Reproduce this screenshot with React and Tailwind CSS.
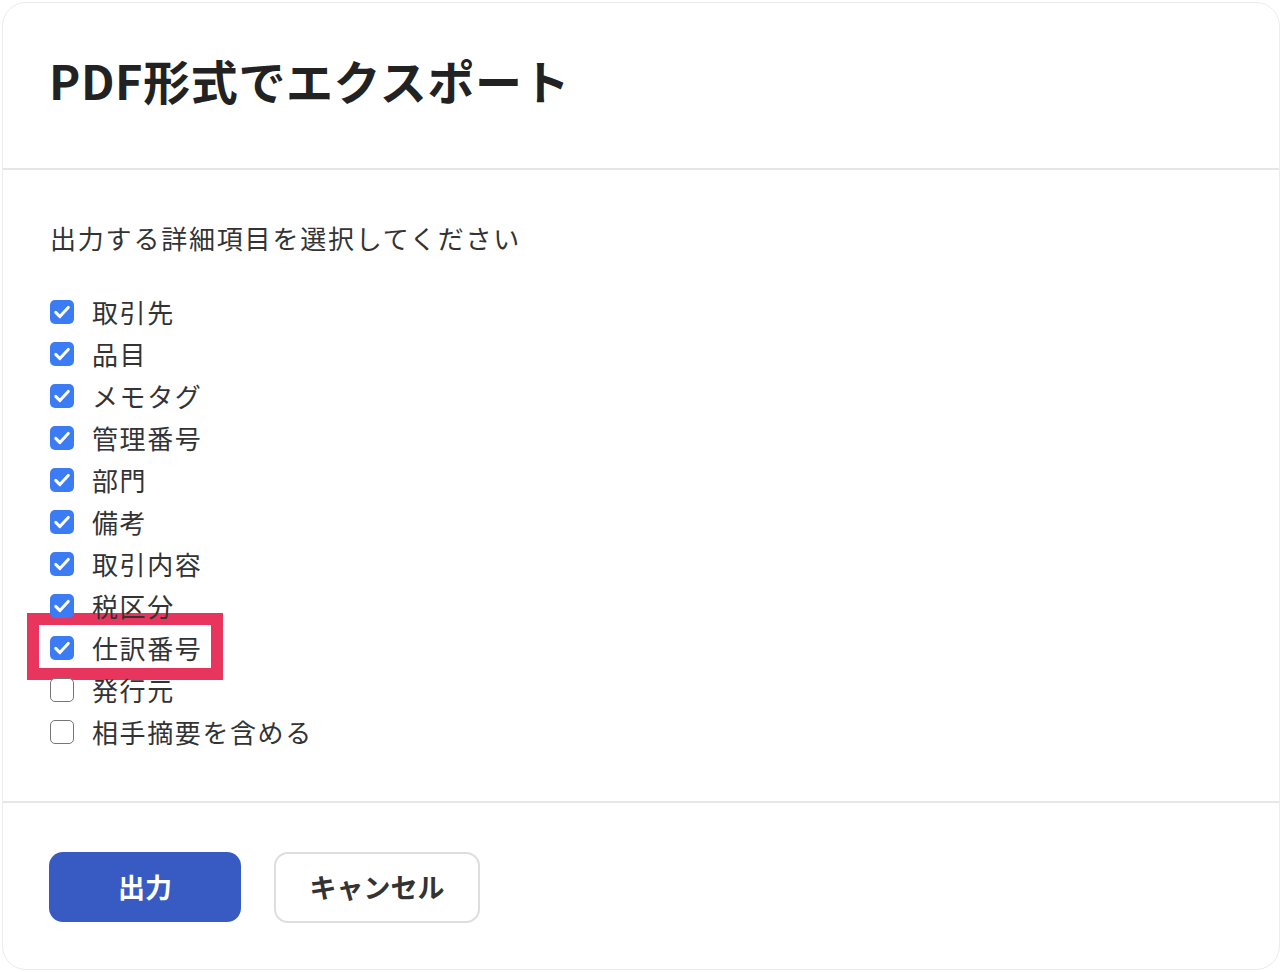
import { useState } from "react";

const ITEMS = [
  { label: "取引先", checked: true },
  { label: "品目", checked: true },
  { label: "メモタグ", checked: true },
  { label: "管理番号", checked: true },
  { label: "部門", checked: true },
  { label: "備考", checked: true },
  { label: "取引内容", checked: true },
  { label: "税区分", checked: true },
  { label: "仕訳番号", checked: true, highlight: true },
  { label: "発行元", checked: false },
  { label: "相手摘要を含める", checked: false },
];

function CheckBox({ checked, onClick }) {
  if (checked) {
    return (
      <button
        type="button"
        onClick={onClick}
        className="w-6 h-6 rounded-[5px] bg-[#3b7cf4] flex items-center justify-center shrink-0"
      >
        <svg className="w-[20px] h-[20px]" viewBox="0 0 24 24" fill="none">
          <path
            d="M4.5 12.5l5 5L19.5 6.5"
            stroke="white"
            strokeWidth={3.6}
            strokeLinecap="round"
            strokeLinejoin="round"
          />
        </svg>
      </button>
    );
  }
  return (
    <button
      type="button"
      onClick={onClick}
      className="w-6 h-6 rounded-[5px] border-[1.5px] border-[#767676] bg-white shrink-0"
    />
  );
}

export default function App() {
  const [items, setItems] = useState(ITEMS);

  function toggle(i) {
    setItems((prev) => prev.map((it, j) => (j === i ? { ...it, checked: !it.checked } : it)));
  }

  return (
    <div
      className="min-h-screen bg-white p-[2px] text-[#333]"
      style={{ fontFamily: '"Noto Sans CJK JP", "Noto Sans", sans-serif' }}
    >
      <div className="h-[968px] rounded-[24px] border border-[#ececec] bg-white flex flex-col">
        <div className="h-[167px] flex items-center px-[46px] pb-[10px] border-b-2 border-[#e6e6e6]">
          <h1 className="text-[47px] font-bold text-[#222] tracking-[0.6px]">PDF形式でエクスポート</h1>
        </div>

        <div className="px-[47px] pt-[50px] pb-[48px] border-b-2 border-[#e6e6e6]">
          <p className="text-[26px] leading-[36px] text-[#333] tracking-[1.8px]">出力する詳細項目を選択してください</p>
          <ul className="mt-[35px]">
            {items.map((it, i) => (
              <li key={it.label} className="h-[42px] flex items-center">
                <div className="relative flex items-center">
                  {it.highlight && (
                    <div className="absolute -left-[23px] -top-[17px] w-[196px] h-[67px] border-[12px] border-[#e8355e] bg-white z-10" />
                  )}
                  <div className="relative z-20 flex items-center gap-[18px]">
                    <CheckBox checked={it.checked} onClick={() => toggle(i)} />
                    <span className="text-[26px] leading-[36px] text-[#333] tracking-[1.6px]">{it.label}</span>
                  </div>
                </div>
              </li>
            ))}
          </ul>
        </div>

        <div className="flex items-start gap-[33px] px-[46px] pt-[49px]">
          <button
            type="button"
            className="w-[192px] h-[70px] rounded-[14px] bg-[#385bc3] text-white text-[27px] font-bold"
          >
            出力
          </button>
          <button
            type="button"
            className="w-[206px] h-[71px] rounded-[14px] border-2 border-[#dedede] bg-white text-[#333] text-[27px] font-bold"
          >
            キャンセル
          </button>
        </div>
      </div>
    </div>
  );
}
